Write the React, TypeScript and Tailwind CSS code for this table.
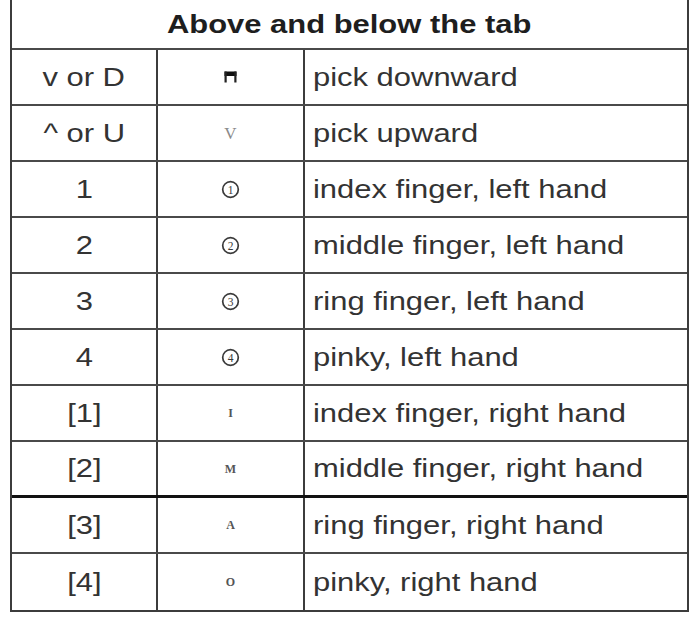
import React from "react";

type Row = {
  key: string;
  sym: React.ReactNode;
  desc: string;
  thick?: boolean;
};

function DownPick() {
  return (
    <svg width="13" height="12" viewBox="0 0 13 12" className="block">
      <rect x="0.5" y="0.5" width="12" height="4.5" fill="#111" />
      <rect x="0.5" y="0.5" width="2.2" height="11" fill="#222" />
      <rect x="10.3" y="0.5" width="2.2" height="11" fill="#222" />
    </svg>
  );
}

function Circled({ n }: { n: number }) {
  return (
    <svg width="19" height="19" viewBox="0 0 19 19" className="block">
      <circle cx="9.5" cy="9.5" r="7.8" fill="none" stroke="#3a3a3a" strokeWidth="1.7" />
      <text
        x="9.5"
        y="13.6"
        textAnchor="middle"
        fontSize="11.5"
        fontFamily="'Liberation Serif', serif"
        fill="#3a3a3a"
      >
        {n}
      </text>
    </svg>
  );
}

function SmallCap({ c }: { c: string }) {
  return (
    <span className="font-['Liberation_Serif',serif] text-[12px] leading-none font-bold text-[#555]">
      {c}
    </span>
  );
}

const ROWS: Row[] = [
  { key: "v or D", sym: <DownPick />, desc: "pick downward" },
  {
    key: "^ or U",
    sym: (
      <span className="font-['Liberation_Serif',serif] text-[17px] leading-none text-[#8a8a8a]">
        V
      </span>
    ),
    desc: "pick upward",
  },
  { key: "1", sym: <Circled n={1} />, desc: "index finger, left hand" },
  { key: "2", sym: <Circled n={2} />, desc: "middle finger, left hand" },
  { key: "3", sym: <Circled n={3} />, desc: "ring finger, left hand" },
  { key: "4", sym: <Circled n={4} />, desc: "pinky, left hand" },
  { key: "[1]", sym: <SmallCap c="I" />, desc: "index finger, right hand" },
  { key: "[2]", sym: <SmallCap c="M" />, desc: "middle finger, right hand", thick: true },
  { key: "[3]", sym: <SmallCap c="A" />, desc: "ring finger, right hand" },
  { key: "[4]", sym: <SmallCap c="O" />, desc: "pinky, right hand" },
];

export default function App() {
  return (
    <div className="w-[700px] h-[619px] bg-white overflow-hidden font-['Liberation_Sans',Arial,sans-serif]">
      <div className="ml-[10px] w-[679px] border-x-2 border-b-2 border-[#3c3c3c]">
        {/* шапка */}
        <div className="h-[50px] border-b-2 border-[#4a4a4a] flex items-center justify-center">
          <span className="inline-block scale-x-[1.19] text-[26px] font-bold text-[#1e1e1e]">
            Above and below the tab
          </span>
        </div>

        {ROWS.map((r, i) => (
          <div
            key={r.key}
            className={
              "grid grid-cols-[144px_147px_1fr] h-[56px] " +
              (i === ROWS.length - 1
                ? ""
                : r.thick
                  ? "border-b-[3px] border-[#111]"
                  : "border-b-2 border-[#4a4a4a]")
            }
          >
            <div className="flex items-center justify-center text-[26px] text-[#333]">
              <span className="inline-block scale-x-[1.19]">{r.key}</span>
            </div>
            <div className="border-l-2 border-[#3c3c3c] flex items-center justify-center">
              {r.sym}
            </div>
            <div className="border-l-2 border-[#3c3c3c] flex items-center pl-[8px] text-[26px] text-[#333] whitespace-nowrap">
              <span className="inline-block origin-left scale-x-[1.19]">{r.desc}</span>
            </div>
          </div>
        ))}
      </div>
    </div>
  );
}
